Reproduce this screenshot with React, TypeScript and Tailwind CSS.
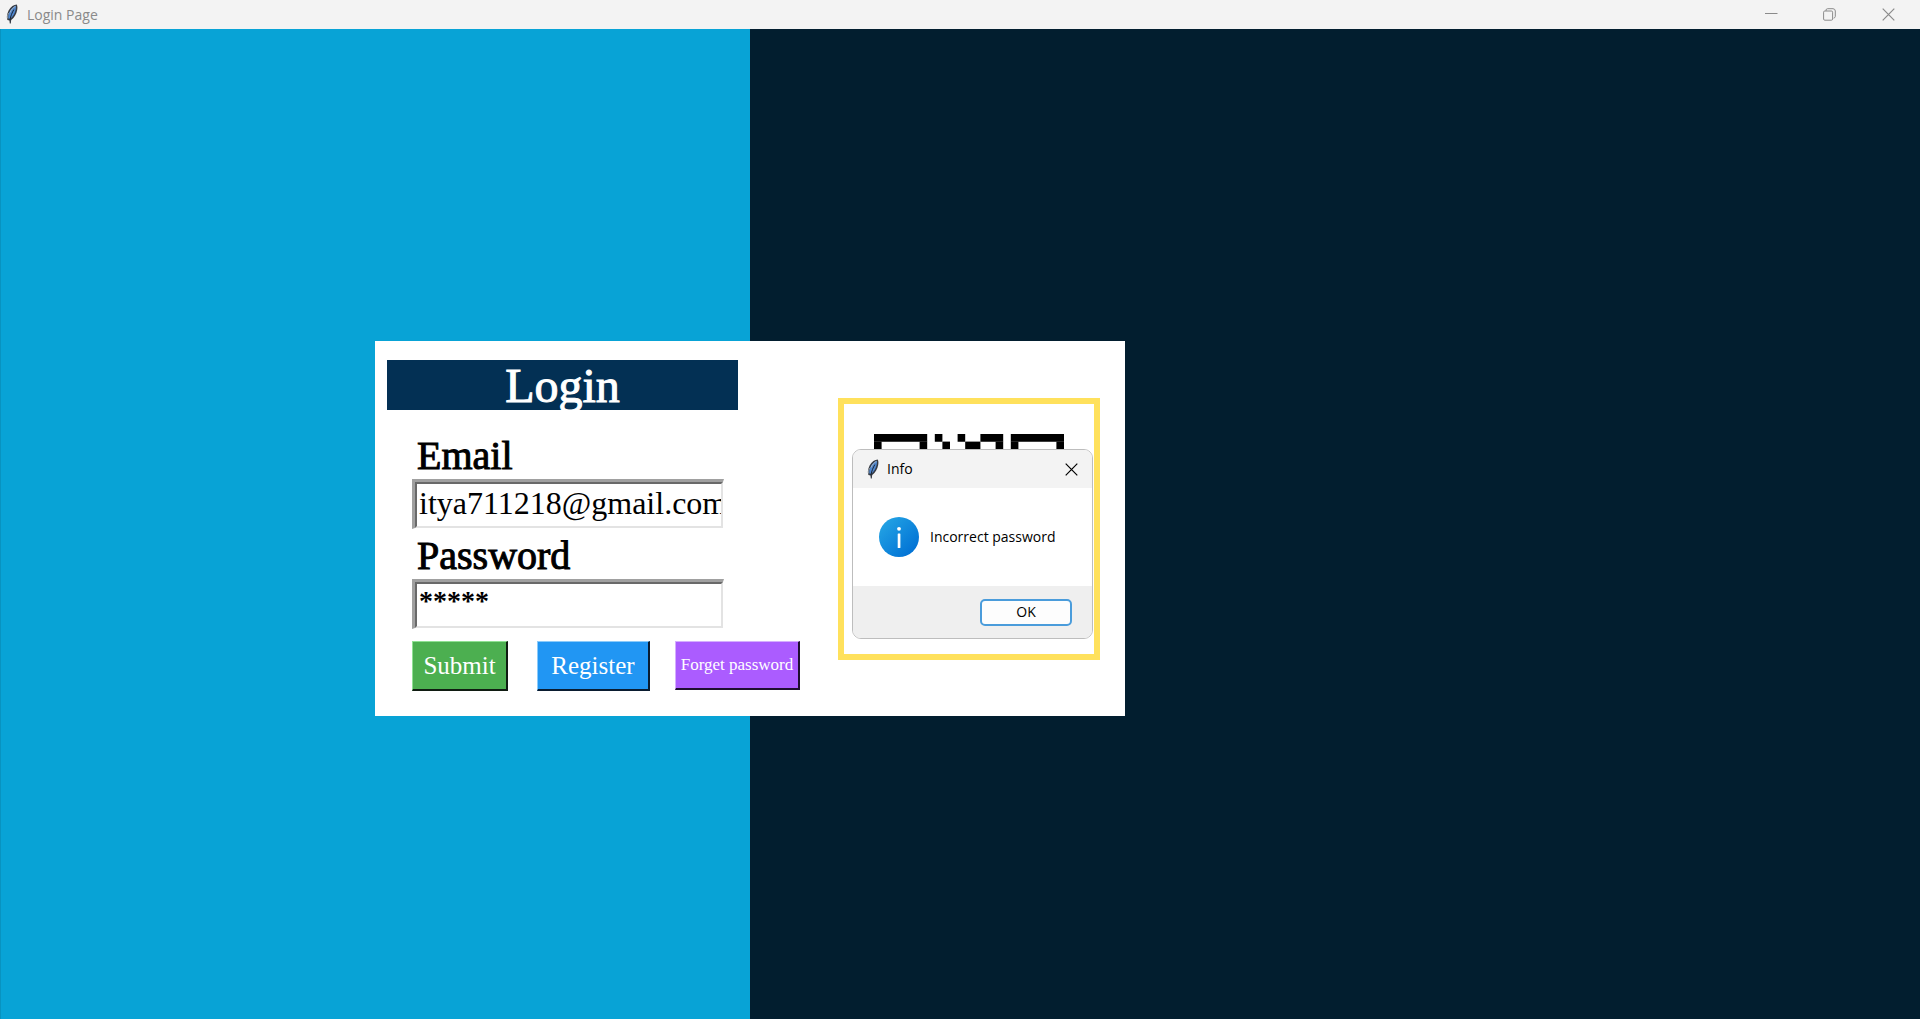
import React, { useState } from "react";

const serif = "font-['Liberation_Serif',serif]";
const sans = "font-['Open_Sans','Noto_Sans',sans-serif]";

function Feather({ className }: { className: string }) {
  return (
    <svg viewBox="0 0 12 20" className={className} aria-hidden="true">
      <path d="M10.8 0.6C8 0.6 4.6 2.8 2.6 6.6C0.8 10.4 0.4 13.6 1.4 16L3.4 16.4L3.8 19.6L4.8 19.6L5.2 16C8.6 13.6 10.4 10 11.2 6C11.6 3.8 11.5 2 10.8 0.6Z" fill="#363b44" />
      <path d="M9.8 1.8C7.2 2.8 4.6 5.2 3.2 8.6C2.2 11 2 13 2.6 14.8L4.6 14.6C7.2 12.4 8.8 9.4 9.6 6C10 4.2 10.2 2.8 9.8 1.8Z" fill="#4f87cf" />
      <path d="M9.4 2.4C7 3.6 5.2 5.8 4 8.6" stroke="#a8b4c4" strokeWidth="1" fill="none" />
      <path d="M7.8 5.6C6.2 8.6 4.6 11.8 4 16" stroke="#1a2433" strokeWidth="1" fill="none" />
      <path d="M2.6 9L1.4 12L1.6 14.6" stroke="#9aa0a6" strokeWidth="0.9" fill="none" />
    </svg>
  );
}

function CloseIcon({ className }: { className: string }) {
  return (
    <svg viewBox="0 0 13 13" className={className} fill="none" stroke="currentColor" strokeWidth="1.2" aria-hidden="true">
      <path d="M0.7 0.7L12.3 12.3M12.3 0.7L0.7 12.3" />
    </svg>
  );
}

function TitleBar() {
  return (
    <header className={`flex h-[29px] shrink-0 items-center bg-[#f3f3f3] pl-1.5 ${sans}`}>
      <Feather className="h-5 w-3 -translate-y-px" />
      <h1 className="ml-[9px] text-[14px] leading-5 text-[#8a8a8a]">Login Page</h1>
      <div className="ml-auto flex h-full pr-0.5 text-[#8a8a8a]">
        <button aria-label="Minimize" className="grid w-[58px] place-items-center">
          <svg viewBox="0 0 13 13" className="h-[13px] w-[13px]" stroke="currentColor" aria-hidden="true">
            <path d="M0 5.5H12.5" />
          </svg>
        </button>
        <button aria-label="Restore" className="grid w-[58px] place-items-center">
          <svg viewBox="0 0 13 13" className="h-[13px] w-[13px]" fill="none" stroke="currentColor" aria-hidden="true">
            <rect x="0.6" y="3" width="9" height="9.2" rx="1.2" />
            <path d="M3 3V2Q3.2 0.7 4.6 0.7H10Q12.3 0.9 12.3 3V8.4Q12.2 9.8 10.6 10.2" />
          </svg>
        </button>
        <button aria-label="Close" className="grid w-[60px] place-items-center">
          <CloseIcon className="h-[13px] w-[13px]" />
        </button>
      </div>
    </header>
  );
}

function Field({
  id,
  label,
  value,
  onChange,
  inputClass,
}: {
  id: string;
  label: string;
  value: string;
  onChange: (v: string) => void;
  inputClass: string;
}) {
  return (
    <div className="flex h-[100px] flex-col">
      <label htmlFor={id} className="h-[50px] pl-[5px] text-[40px] leading-[54px] [-webkit-text-stroke:1px_black]">
        {label}
      </label>
      <div className="h-[50px] w-[312px] border-[3px] border-t-[#a0a0a0] border-r border-b border-r-white border-b-white border-l-[#a0a0a0]">
        <div className="h-full border-2 border-t-[#696969] border-r-[#e3e3e3] border-b-[#e3e3e3] border-l-[#696969] pl-0.5">
          <input
            id={id}
            type="text"
            value={value}
            onChange={(e) => onChange(e.target.value)}
            className={`block h-full w-full bg-white text-black outline-none ${inputClass}`}
          />
        </div>
      </div>
    </div>
  );
}

const qrRuns = [
  [0, 0, 7], [8, 0, 1], [11, 0, 1], [14, 0, 3], [18, 0, 7],
  [0, 1, 1], [6, 1, 1], [9, 1, 1], [12, 1, 2], [16, 1, 1], [18, 1, 1], [24, 1, 1],
  [0, 2, 1], [2, 2, 3], [6, 2, 1], [9, 2, 1], [15, 2, 2], [18, 2, 1], [20, 2, 3], [24, 2, 1],
];

function QrCode() {
  return (
    <div className="h-[262px] w-[262px] border-[6px] border-[#ffe15c] bg-white p-[30px]">
      <svg viewBox="0 0 25 25" className="h-[190px] w-[190px]" role="img" aria-label="QR code">
        {qrRuns.map(([x, y, w]) => (
          <rect key={`${x}-${y}`} x={x} y={y} width={w} height={1.02} />
        ))}
      </svg>
    </div>
  );
}

function InfoDialog({ onClose }: { onClose: () => void }) {
  return (
    <div
      role="dialog"
      aria-label="Info"
      className={`absolute top-[51px] left-3.5 flex w-[241px] flex-col overflow-hidden rounded-[9px] border border-[#bdbdbd] bg-white text-black ${sans}`}
    >
      <div className="flex h-[38px] items-center bg-[#f3f3f3] pr-[14px] pl-3.5">
        <Feather className="h-5 w-3" />
        <h2 className="ml-2 text-[14px] leading-5">Info</h2>
        <button aria-label="Close" onClick={onClose} className="ml-auto">
          <CloseIcon className="h-[13px] w-[13px]" />
        </button>
      </div>
      <div className="flex h-[98px] items-center gap-[11px] pl-[26px]">
        <svg viewBox="0 0 40 40" className="h-10 w-10 shrink-0" aria-hidden="true">
          <defs>
            <linearGradient id="info" x1="0" y1="0" x2="1" y2="1">
              <stop offset="0.1" stopColor="#23a3e4" />
              <stop offset="0.9" stopColor="#0070d4" />
            </linearGradient>
          </defs>
          <circle cx="20" cy="20" r="20" fill="url(#info)" />
          <circle cx="20" cy="11.8" r="1.9" fill="white" />
          <rect x="18.7" y="16.5" width="2.7" height="14.5" rx="0.6" fill="white" />
        </svg>
        <p className="text-[14px] leading-5 whitespace-nowrap">Incorrect password</p>
      </div>
      <div className="flex h-[52px] items-center justify-end bg-[#efefef] pr-5">
        <button
          onClick={onClose}
          className="h-[27px] w-[92px] rounded-[5px] border-2 border-[#4a9cdb] bg-[#fdfdfd] text-[14px] leading-5"
        >
          OK
        </button>
      </div>
    </div>
  );
}

export default function App() {
  const [email, setEmail] = useState("itya711218@gmail.com");
  const [password, setPassword] = useState("*****");
  const [open, setOpen] = useState(true);

  return (
    <div className={`flex min-h-screen flex-col bg-[#021e2f] text-black ${serif}`}>
      <TitleBar />
      <main className="grid flex-1">
        <div className="col-start-1 row-start-1 w-[750px] border-l border-[#0893c0] bg-[#08a3d6]" />
        <section className="z-10 col-start-1 row-start-1 mt-[312px] ml-[375px] flex h-[375px] w-[750px] justify-between self-start bg-white pt-[19px] pr-[25px] pl-3">
          <form onSubmit={(e) => e.preventDefault()}>
            <h2 className="h-[50px] w-[351px] bg-[#033054] text-center text-[48px] leading-[52px] text-white [-webkit-text-stroke:1px_white]">
              Login
            </h2>
            <div className="mt-[19px] ml-[25px]">
              <Field id="email" label="Email" value={email} onChange={setEmail} inputClass="pb-1 text-[32px] leading-10" />
              <Field
                id="password"
                label="Password"
                value={password}
                onChange={setPassword}
                inputClass="pb-2 text-[28px] leading-8 font-bold"
              />
              <div className="mt-3 flex items-start">
                <button className="h-[50px] w-[96px] border border-t-[#8fe193] border-r-2 border-b-2 border-r-[#101c12] border-b-[#101c12] border-l-[#8fe193] bg-[#4caf50] text-[25px] leading-8 whitespace-nowrap text-white">
                  Submit
                </button>
                <button
                  type="button"
                  className="ml-[29px] h-[50px] w-[113px] border border-t-[#8ccbfa] border-r-2 border-b-2 border-r-[#0a1c30] border-b-[#0a1c30] border-l-[#8ccbfa] bg-[#2196f3] text-[25px] leading-8 whitespace-nowrap text-white"
                >
                  Register
                </button>
                <button
                  type="button"
                  className="ml-[25px] h-[49px] w-[125px] border border-t-[#d5aeff] border-r-2 border-b-2 border-r-[#1e0f30] border-b-[#1e0f30] border-l-[#d5aeff] bg-[#ab5cff] text-[17px] leading-6 whitespace-nowrap text-white"
                >
                  Forget password
                </button>
              </div>
            </div>
          </form>
          <div className="relative mt-[38px] self-start">
            <QrCode />
            {open && <InfoDialog onClose={() => setOpen(false)} />}
          </div>
        </section>
      </main>
    </div>
  );
}
